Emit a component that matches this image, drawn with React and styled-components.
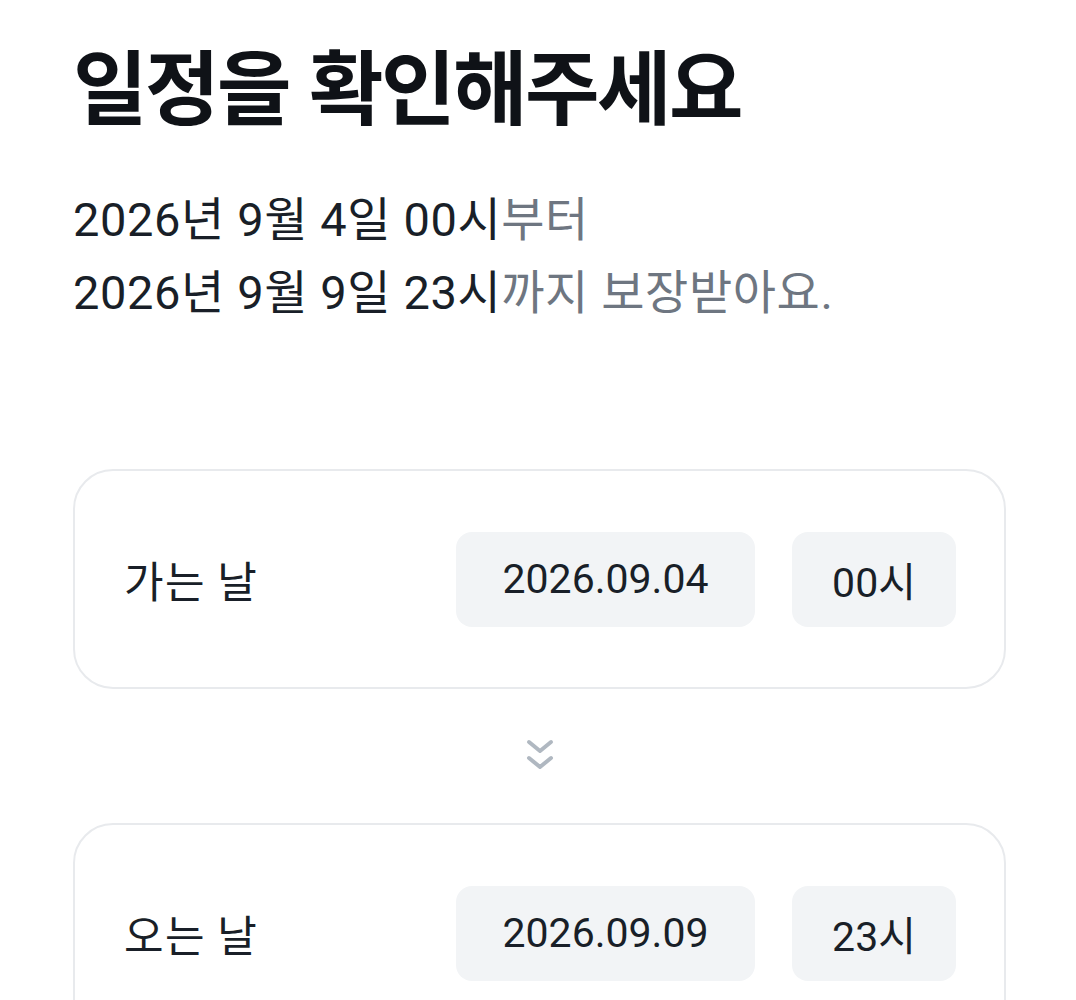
import React from "react";
import styled, { createGlobalStyle } from "styled-components";

const GlobalStyle = createGlobalStyle`
  body {
    margin: 0;
    background: #ffffff;
    font-family: Roboto, "Noto Sans CJK KR", sans-serif;
    color: #191f28;
  }
`;

const Page = styled.div`
  padding: 29px 70px 0 73px;
`;

const Title = styled.h1`
  margin: 0;
  font-family: "Noto Sans CJK KR", sans-serif;
  font-size: 81px;
  font-weight: 700;
  line-height: 108px;
  letter-spacing: -2.5px;
  word-spacing: 4px;
  color: #0f1217;
`;

const Summary = styled.div`
  margin-top: 46px;
  font-size: 47px;
  line-height: 73px;
  letter-spacing: 0.6px;
`;

const Line = styled.p`
  margin: 0;
`;

const Muted = styled.span`
  color: #6e7681;
`;

const Schedule = styled.div`
  margin-top: 140px;
  display: flex;
  flex-direction: column;
  align-items: center;
`;

const Card = styled.div`
  box-sizing: border-box;
  width: 100%;
  height: 220px;
  border: 2px solid #e8eaed;
  border-radius: 40px;
  padding: 0 48px 0 49px;
  display: flex;
  align-items: center;
`;

const Label = styled.span`
  flex: 1;
  font-family: "Noto Sans CJK KR", sans-serif;
  font-size: 43px;
  font-weight: 400;
  letter-spacing: 1.5px;
  color: #191f28;
`;

const Pills = styled.div`
  display: flex;
  gap: 37px;
`;

const Pill = styled.div`
  box-sizing: border-box;
  width: ${(p) => p.$width}px;
  height: 95px;
  border-radius: 16px;
  background: #f2f4f6;
  display: flex;
  align-items: center;
  justify-content: center;
  font-size: 41px;
  color: #191f28;
`;

const Arrow = styled.div`
  height: 134px;
  display: flex;
  align-items: center;
  justify-content: center;
  color: #b0b8c1;
`;

const DoubleChevron = () => (
  <svg width="30" height="36" viewBox="0 0 30 36" fill="none">
    <path
      d="M4 4 L15 13 L26 4"
      stroke="currentColor"
      strokeWidth="4"
      strokeLinecap="round"
      strokeLinejoin="round"
    />
    <path
      d="M4 20 L15 29 L26 20"
      stroke="currentColor"
      strokeWidth="4"
      strokeLinecap="round"
      strokeLinejoin="round"
    />
  </svg>
);

const rows = [
  { label: "가는 날", date: "2026.09.04", hour: "00시" },
  { label: "오는 날", date: "2026.09.09", hour: "23시" },
];

const ScheduleCard = ({ label, date, hour }) => (
  <Card>
    <Label>{label}</Label>
    <Pills>
      <Pill $width={299}>{date}</Pill>
      <Pill $width={164}>{hour}</Pill>
    </Pills>
  </Card>
);

export default function App() {
  return (
    <>
      <GlobalStyle />
      <Page>
        <Title>일정을 확인해주세요</Title>
        <Summary>
          <Line>
            2026년 9월 4일 00시<Muted>부터</Muted>
          </Line>
          <Line>
            2026년 9월 9일 23시<Muted>까지 보장받아요.</Muted>
          </Line>
        </Summary>
        <Schedule>
          <ScheduleCard {...rows[0]} />
          <Arrow>
            <DoubleChevron />
          </Arrow>
          <ScheduleCard {...rows[1]} />
        </Schedule>
      </Page>
    </>
  );
}
